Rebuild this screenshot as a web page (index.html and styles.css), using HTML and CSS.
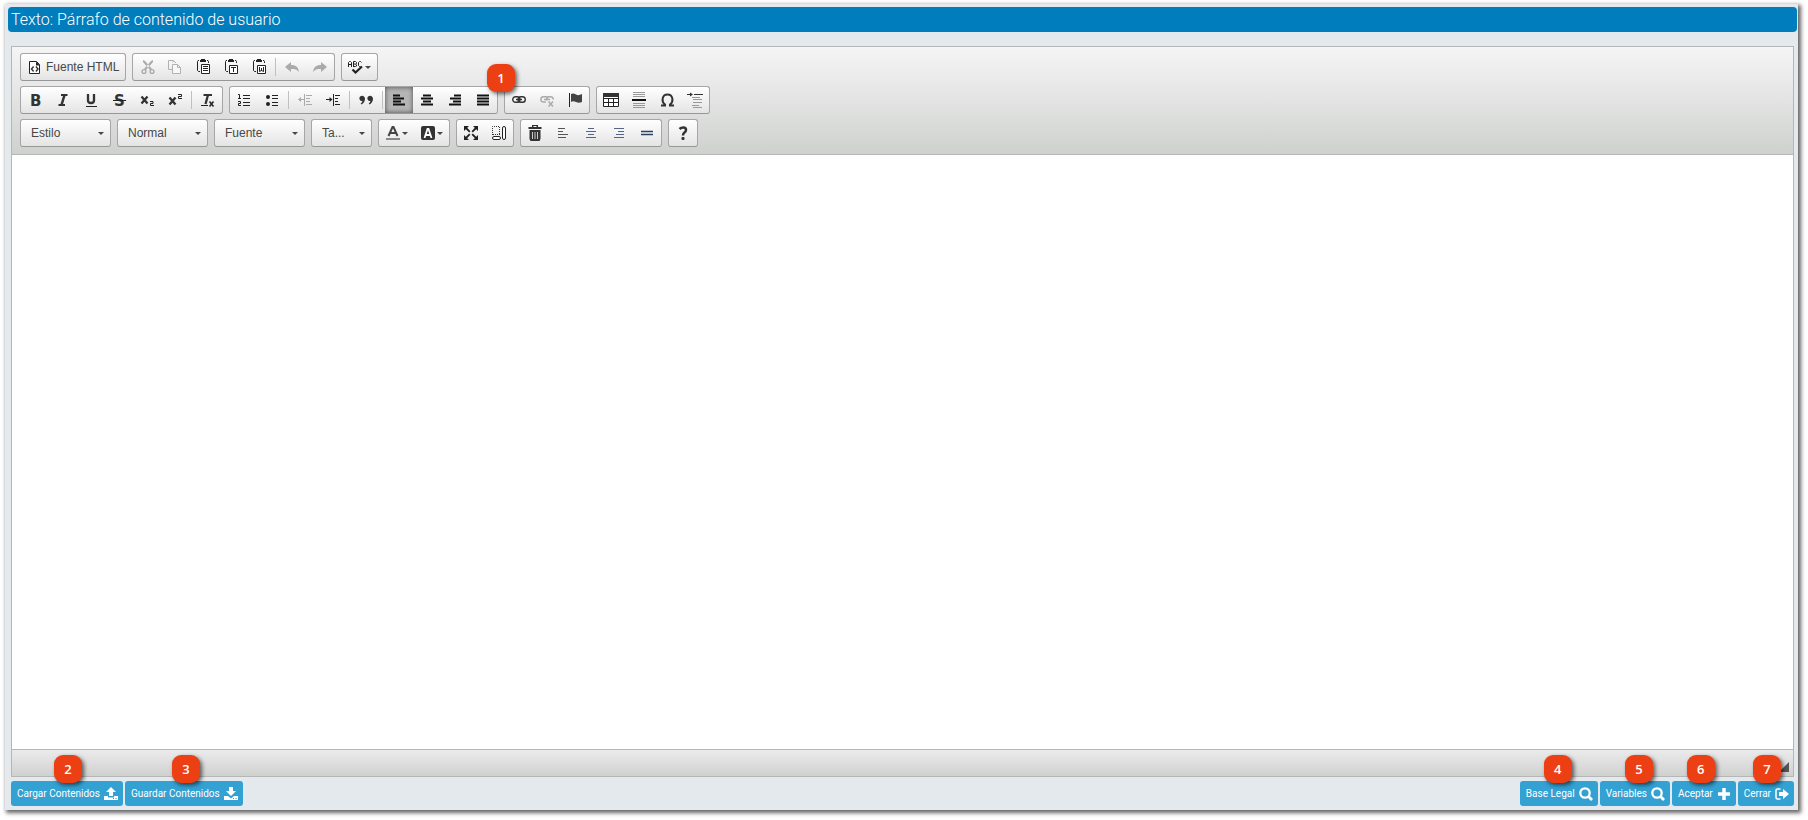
FILE: index.html
```html
<!DOCTYPE html>
<html lang="es">
<head>
<meta charset="utf-8">
<title>Texto: Párrafo de contenido de usuario</title>
<link rel="stylesheet" href="styles.css">
</head>
<body>
<main class="panel">
  <h1 class="title">Texto: Párrafo de contenido de usuario</h1>

  <section class="editor">
    <div class="toolbar" role="toolbar" aria-label="Barra de herramientas">
      <div class="row">
        <div class="group">
          <button class="btn" type="button"><svg class="icon" viewBox="0 0 16 16"><path d="M2.500 2.500h7l3 3v9h-10z" fill="#fff" stroke="#222"/><path d="M9 2.500v4h4" fill="#222"/><path d="M6.600 7.500L4.500 10l2.100 2.500M8.900 7.500L11 10l-2.100 2.500" fill="none" stroke="#333" stroke-width="1.400"/></svg><span class="btn-label">Fuente HTML</span></button>
        </div>
        <div class="group">
          <button class="btn off" type="button" aria-label="Cortar"><svg class="icon" viewBox="0 0 16 16"><path d="M4 1l2 1 7 8-1.500 1.500L4 3zM14 1l-2 1-7 8 1.500 1.500L14 3z" fill="#aaa"/><circle cx="5" cy="12.500" r="1.900" fill="none" stroke="#aaa" stroke-width="1.400"/><circle cx="13" cy="12.500" r="1.900" fill="none" stroke="#aaa" stroke-width="1.400"/></svg></button>
          <button class="btn off" type="button" aria-label="Copiar"><svg class="icon" viewBox="0 0 16 16"><path d="M5 10.500H1.500v-9h5l2.500 2.500M6 1.500v2" fill="none" stroke="#b2b2b2"/><path d="M5.500 5.500h5l3 3v6h-8zM10.500 5.500v3h3" fill="#f8f8f8" stroke="#b2b2b2"/></svg></button>
          <button class="btn" type="button" aria-label="Pegar"><svg class="icon" viewBox="0 0 16 16"><path d="M4 1.500H3l-.500 1v9l1 1h1.500M12 1.500h1l.500 1V4" fill="none" stroke="#222"/><path d="M5 2V1h1V0h4v1h1v2H5z" fill="#222"/><path d="M6.500 5.500h8v9h-8z" fill="#fff" stroke="#222"/><path d="M8 7.500h5M8 9.500h5M8 11.500h5" stroke="#222"/></svg></button>
          <button class="btn" type="button" aria-label="Pegar como texto plano"><svg class="icon" viewBox="0 0 16 16"><path d="M4 1.500H3l-.500 1v9l1 1h1.500M12 1.500h1l.500 1V4" fill="none" stroke="#222"/><path d="M5 2V1h1V0h4v1h1v2H5z" fill="#222"/><path d="M6.500 6.500h8v8h-8z" fill="#fff" stroke="#222"/><path d="M8 8.500h5M10.500 8v5" stroke="#222"/></svg></button>
          <button class="btn" type="button" aria-label="Pegar desde Word"><svg class="icon" viewBox="0 0 16 16"><path d="M4 1.500H3l-.500 1v9l1 1h1.500M12 1.500h1l.500 1V4" fill="none" stroke="#222"/><path d="M5 2V1h1V0h4v1h1v2H5z" fill="#222"/><path d="M6.500 6.500h8v8h-8z" fill="#fff" stroke="#222"/><path d="M8.500 8v4.500l2-1 2 1V8M10.500 9v3" fill="none" stroke="#222"/></svg></button>
          <span class="sep"></span>
          <button class="btn off" type="button" aria-label="Deshacer"><svg class="icon" viewBox="0 0 16 16"><path d="M1 8l6-5v3c5 0 7.500 2.500 8 7C13 10.500 11 10 7 10v3z" fill="#aaa"/></svg></button>
          <button class="btn off" type="button" aria-label="Rehacer"><svg class="icon" viewBox="0 0 16 16"><path d="M15 8L9 3v3c-5 0-7.500 2.500-8 7C3 10.500 5 10 9 10v3z" fill="#aaa"/></svg></button>
        </div>
        <div class="group">
          <button class="btn" type="button" aria-label="Corrector ortográfico"><svg class="icon" viewBox="0 0 16 16"><path d="M.500 8V3.500l1-1h1l1 1V8M.500 5.500h3M5.500 8V2.500h2l1 1v1l-1 .500 1 1v1l-1 .500h-2M5.500 5h2M13.500 3.500l-1-1h-1l-1 1v3l1 1h1" fill="none" stroke="#222"/><path d="M4.500 10.500l3 3L14 7.500" fill="none" stroke="#222" stroke-width="2.200"/></svg><span class="arrow"></span></button>
        </div>
      </div>

      <div class="row">
        <div class="group">
          <button class="btn" type="button" aria-label="Negrita"><svg class="icon glyph" viewBox="0 0 16 16"><text x="3" y="14">B</text></svg></button>
          <button class="btn" type="button" aria-label="Cursiva"><svg class="icon" viewBox="0 0 16 16"><path d="M6 3h6.500M3.500 13H10" stroke="#333" stroke-width="2"/><path d="M9.500 3l-3 10" stroke="#333" stroke-width="2.500"/></svg></button>
          <button class="btn" type="button" aria-label="Subrayado"><svg class="icon" viewBox="0 0 16 16"><path d="M5 2v6.500q0 2.500 3 2.500t3-2.500V2" fill="none" stroke="#333" stroke-width="2.300"/><path d="M3 14.500h11" stroke="#222"/></svg></button>
          <button class="btn" type="button" aria-label="Tachado"><svg class="icon glyph" viewBox="0 0 16 16"><text x="3" y="14">S</text><path d="M2 8.500h13" stroke="#222"/></svg></button>
          <button class="btn" type="button" aria-label="Subíndice"><svg class="icon" viewBox="0 0 16 16"><path d="M2.500 4.500l6 7M8.500 4.500l-6 7" stroke="#333" stroke-width="2.300"/><path d="M11 9.500h3v2h-2.500v2h3.500" fill="none" stroke="#222"/></svg></button>
          <button class="btn" type="button" aria-label="Superíndice"><svg class="icon" viewBox="0 0 16 16"><path d="M2.500 5.500l6 7M8.500 5.500l-6 7" stroke="#333" stroke-width="2.300"/><path d="M11 2.500h3.500v2h-3v2h3.500" fill="none" stroke="#222"/></svg></button>
          <span class="sep"></span>
          <button class="btn" type="button" aria-label="Eliminar formato"><svg class="icon" viewBox="0 0 16 16"><path d="M3.500 3H12" stroke="#333" stroke-width="2"/><path d="M8 3L5.500 12" stroke="#333" stroke-width="2.300"/><path d="M1 13.500h7" stroke="#222"/><path d="M9.500 9.500l4 5M13.500 9.500l-4 5" stroke="#222" stroke-width="1.500"/></svg></button>
        </div>
        <div class="group">
          <button class="btn" type="button" aria-label="Lista numerada"><svg class="icon" viewBox="0 0 16 16"><path d="M2 2.500h1.500v4M2 6.500h3M2 9.500h2.500v2H2.500v2h2.500M7 3.500h7M7 6.500h7M7 10.500h7M7 13.500h7" fill="none" stroke="#222"/></svg></button>
          <button class="btn" type="button" aria-label="Viñetas"><svg class="icon" viewBox="0 0 16 16"><circle cx="4" cy="5" r="2" fill="#222"/><circle cx="4" cy="12" r="2" fill="#222"/><path d="M8 3.500h6M8 6.500h6M8 10.500h6M8 13.500h6" stroke="#222"/></svg></button>
          <span class="sep"></span>
          <button class="btn off" type="button" aria-label="Disminuir sangría"><svg class="icon" viewBox="0 0 16 16"><path d="M2 7.500h5M7.500 2v12M9 3.500h6M9 6.500h4M9 9.500h4M9 12.500h6" stroke="#aaa"/><path d="M1 7.500l3-2.500v5z" fill="#aaa"/></svg></button>
          <button class="btn" type="button" aria-label="Aumentar sangría"><svg class="icon" viewBox="0 0 16 16"><path d="M1 7.500h6M8.500 2v12M10 3.500h5M10 6.500h3M10 9.500h3M10 12.500h5" stroke="#222"/><path d="M7.500 7.500L4.500 5v5z" fill="#222"/></svg></button>
          <span class="sep"></span>
          <button class="btn" type="button" aria-label="Cita"><svg class="icon" viewBox="0 0 16 16"><path d="M3.500 4a2.700 2.700 0 0 1 3.500 2.500c0 3-1.500 5-3.500 6l-.800-1c1-.800 1.600-1.500 1.700-2.500A2.500 2.500 0 0 1 3.500 4zM11.500 4A2.700 2.700 0 0 1 15 6.500c0 3-1.500 5-3.500 6l-.800-1c1-.800 1.600-1.500 1.700-2.500A2.500 2.500 0 0 1 11.500 4z" fill="#333"/></svg></button>
          <span class="sep"></span>
          <button class="btn on" type="button" aria-label="Alinear a la izquierda" aria-pressed="true"><svg class="icon" viewBox="0 0 16 16"><path d="M2 3h7M2 6h11M2 9h8M2 12h12" stroke="#111" stroke-width="2" transform="translate(0 .5)"/></svg></button>
          <button class="btn" type="button" aria-label="Centrar"><svg class="icon" viewBox="0 0 16 16"><path d="M4 3h8M2 6h12M4 9h8M2 12h12" stroke="#111" stroke-width="2" transform="translate(0 .5)"/></svg></button>
          <button class="btn" type="button" aria-label="Alinear a la derecha"><svg class="icon" viewBox="0 0 16 16"><path d="M7 3h7M3 6h11M6 9h8M2 12h12" stroke="#111" stroke-width="2" transform="translate(0 .5)"/></svg></button>
          <button class="btn" type="button" aria-label="Justificar"><svg class="icon" viewBox="0 0 16 16"><path d="M2 3h12M2 6h12M2 9h12M2 12h12" stroke="#111" stroke-width="2" transform="translate(0 .5)"/></svg></button>
          <span class="badge badge-1">1</span>
        </div>
        <div class="group">
          <button class="btn" type="button" aria-label="Vínculo"><svg class="icon" viewBox="0 0 16 16"><rect x="1.700" y="4.700" width="7.300" height="5.600" rx="2.800" fill="none" stroke="#333" stroke-width="1.400"/><rect x="7" y="4.700" width="7.300" height="5.600" rx="2.800" fill="none" stroke="#333" stroke-width="1.400"/><path d="M5 7.500h6" stroke="#333" stroke-width="1.400"/></svg></button>
          <button class="btn off" type="button" aria-label="Quitar vínculo"><svg class="icon" viewBox="0 0 16 16"><path d="M7 10H4.500a2.600 2.600 0 0 1 0-5.200H7q1.500.200 2 1.500M8 8.500q-1.500-3.700 2-3.700h1.500q2.800.200 2.800 2.700M5 7.500h6" fill="none" stroke="#aaa" stroke-width="1.400"/><path d="M9.500 9.500l4.500 5M14 9.500l-4.500 5" stroke="#aaa" stroke-width="1.500"/></svg></button>
          <button class="btn" type="button" aria-label="Ancla"><svg class="icon" viewBox="0 0 16 16"><path d="M2.500 1v14" stroke="#222"/><path d="M4 2q2.500-1 5 .500T15 2v8q-3 1.500-6 0t-5 0z" fill="#444"/></svg></button>
        </div>
        <div class="group">
          <button class="btn" type="button" aria-label="Tabla"><svg class="icon" viewBox="0 0 16 16"><path d="M.500 2.500h15v12H.500zM1 6.500h14M1 10.500h14M5.500 6v8M10.500 6v8" fill="#fff" stroke="#222"/><path d="M0 1h16v4H0z" fill="#333"/></svg></button>
          <button class="btn" type="button" aria-label="Línea horizontal"><svg class="icon" viewBox="0 0 16 16"><path d="M2 .500h12M2 2.500h12M2 4.500h12M2 11.500h12M2 13.500h12M2 15.500h12" stroke="#999"/><path d="M1 8h14" stroke="#111" stroke-width="2"/></svg></button>
          <button class="btn" type="button" aria-label="Carácter especial"><svg class="icon" viewBox="0 0 16 16"><path d="M2 13.500h4v-1C4 11 3.300 9 3.600 6.800 4 4.300 6 2.500 8.500 2.500s4.500 1.800 4.900 4.300c.300 2.200-.400 4.200-2.400 5.700v1h4" fill="none" stroke="#333" stroke-width="2"/></svg></button>
          <button class="btn" type="button" aria-label="Salto de página"><svg class="icon" viewBox="0 0 16 16"><path d="M0 2.500h5M7 2.500h9" stroke="#333"/><path d="M3 .500l3 2-3 2z" fill="#333"/><path d="M5 5.500h8M6 7.500h9M6 10.500h9M5 13.500h7M6 15.500h9" stroke="#999"/></svg></button>
        </div>
      </div>

      <div class="row">
        <span class="combo"><select aria-label="Estilo"><option>Estilo</option></select></span>
        <span class="combo"><select aria-label="Formato"><option>Normal</option></select></span>
        <span class="combo"><select aria-label="Fuente"><option>Fuente</option></select></span>
        <span class="combo small"><select aria-label="Tamaño"><option>Ta...</option></select></span>
        <div class="group">
          <button class="btn" type="button" aria-label="Color de texto"><svg class="icon" viewBox="0 0 16 16"><path d="M3.500 11L7.500 2h1l4 9M5.500 8h5" fill="none" stroke="#444" stroke-width="2"/><path d="M1 14h14" stroke="#888" stroke-width="2"/></svg><span class="arrow"></span></button>
          <button class="btn" type="button" aria-label="Color de fondo"><svg class="icon" viewBox="0 0 16 16"><rect x="1" y="1" width="14" height="14" rx="2" fill="#333"/><path d="M4.500 13l3-9h1l3 9M6 10h4" fill="none" stroke="#fff" stroke-width="1.800"/></svg><span class="arrow"></span></button>
        </div>
        <div class="group">
          <button class="btn" type="button" aria-label="Maximizar"><svg class="icon" viewBox="0 0 16 16"><path d="M1 1h5L1 6zM15 1v5L10 1zM1 15V10L6 15zM15 15H10L15 10z" fill="#222"/><path d="M3 3l3.800 3.800M13 3L9.200 6.800M3 13l3.800-3.800M13 13L9.200 9.200" stroke="#222" stroke-width="1.800"/></svg></button>
          <button class="btn" type="button" aria-label="Mostrar bloques"><svg class="icon" viewBox="0 0 16 16"><path d="M1.500 10V1.500H9M8.500 2v8M2 9.500h7" fill="none" stroke="#333" stroke-dasharray="1 1"/><rect x="11.500" y="1.500" width="3" height="13" rx="1.500" fill="#fff" stroke="#222"/><rect x="1.500" y="11.500" width="8" height="3" rx="1.500" fill="#fff" stroke="#222"/></svg></button>
        </div>
        <div class="group">
          <button class="btn" type="button" aria-label="Eliminar"><svg class="icon" viewBox="0 0 16 16"><path d="M1.500 2h13v2h-13zM5 2V0h6v2H9.500V1h-3v1zM2.500 5h11v9l-1 2h-9l-1-2z" fill="#333"/><path d="M5.500 7v7M8 7v7M10.500 7v7" stroke="#ccc"/></svg></button>
          <button class="btn" type="button" aria-label="Párrafo a la izquierda"><svg class="icon" viewBox="0 0 16 16"><path d="M3 3.500h7M3 6.500h5M3 9.500h10M3 12.500h8" stroke="#555"/></svg></button>
          <button class="btn" type="button" aria-label="Párrafo centrado"><svg class="icon" viewBox="0 0 16 16"><path d="M5 3.500h6M3 6.500h10M5 9.500h6M3 12.500h10" stroke="#556585"/></svg></button>
          <button class="btn" type="button" aria-label="Párrafo a la derecha"><svg class="icon" viewBox="0 0 16 16"><path d="M3 3.500h10M7 6.500h6M5 9.500h8M3 12.500h10" stroke="#556585"/></svg></button>
          <button class="btn" type="button" aria-label="Separador"><svg class="icon" viewBox="0 0 16 16"><path d="M2 6.500h12M2 9.500h12" stroke="#2b4266" stroke-width="1.500"/></svg></button>
        </div>
        <div class="group">
          <button class="btn" type="button" aria-label="Ayuda"><svg class="icon" viewBox="0 0 16 16"><path d="M4.500 4Q6 2.500 8.500 2.500T11 5Q11 6.500 9.500 7.500T8 10.500" fill="none" stroke="#333" stroke-width="2.500"/><rect x="6.500" y="12" width="3" height="3" rx="1" fill="#333"/></svg></button>
        </div>
      </div>
    </div>
    <div class="content" contenteditable="true" role="textbox" aria-label="Contenido"></div>
    <div class="statusbar"><span class="resizer"></span></div>
  </section>

  <footer class="actions">
    <button class="action" type="button">Cargar Contenidos<svg class="aicon" viewBox="0 0 14 14"><path d="M7 0l5 5H9v4H5V5H2zM0 9h4v1.500h6V9h4v4H0z" fill="#fff"/><path d="M9 11.500h1M11.500 11.500h1" stroke="#34a1d3"/></svg><span class="badge badge-2">2</span></button>
    <button class="action" type="button">Guardar Contenidos<svg class="aicon" viewBox="0 0 14 14"><path d="M5 0h4v4h3L7 9 2 4h3zM0 9h4l3 2.500L10 9h4v4H0z" fill="#fff"/><path d="M9 11.500h1M11.500 11.500h1" stroke="#34a1d3"/></svg><span class="badge badge-3">3</span></button>
    <span class="spacer"></span>
    <button class="action" type="button">Base Legal<svg class="aicon" viewBox="0 0 14 14"><circle cx="6" cy="6" r="4.700" fill="none" stroke="#fff" stroke-width="2.300"/><path d="M9 9l4 4" stroke="#fff" stroke-width="2.800"/></svg><span class="badge badge-4">4</span></button>
    <button class="action" type="button">Variables<svg class="aicon" viewBox="0 0 14 14"><circle cx="6" cy="6" r="4.700" fill="none" stroke="#fff" stroke-width="2.300"/><path d="M9 9l4 4" stroke="#fff" stroke-width="2.800"/></svg><span class="badge badge-5">5</span></button>
    <button class="action" type="button">Aceptar<svg class="aicon" viewBox="0 0 14 14"><path d="M7 1v12M1 7h12" stroke="#fff" stroke-width="3.500"/></svg><span class="badge badge-6">6</span></button>
    <button class="action" type="button">Cerrar<svg class="aicon" viewBox="0 0 14 14"><path d="M5.500 2H2.500Q1 2 1 3.500v7Q1 12 2.500 12h3" fill="none" stroke="#fff" stroke-width="1.500"/><path d="M4 5h4V2l6 5-6 5V9H4z" fill="#fff"/></svg><span class="badge badge-7">7</span></button>
  </footer>
</main>
</body>
</html>
```

FILE: styles.css
```css
* {
  box-sizing: border-box;
}

body {
  margin: 0;
  height: 100vh;
  padding: 4px 10px 10px 5px;
  background: #fff;
  font-family: "Liberation Sans", Arial, sans-serif;
  font-size: 12px;
  display: flex;
}

button,
select {
  font: inherit;
  margin: 0;
}

.panel {
  flex: 1;
  display: flex;
  flex-direction: column;
  padding: 3px 1px 4px 3px;
  background: #e4e9ed;
  box-shadow: 2px 2px 4px 1px rgba(0, 0, 0, 0.6);
}

.title {
  margin: 0 0 14px;
  padding: 0 3px;
  height: 25px;
  border-radius: 4px;
  background: #007dbd;
  color: #fff;
  font-family: Roboto, sans-serif;
  font-size: 16px;
  font-weight: 300;
  line-height: 26px;
}

.editor {
  flex: 1;
  display: flex;
  flex-direction: column;
  margin: 0 3px;
  border: 1px solid #b6b6b6;
}

.toolbar {
  display: flex;
  flex-direction: column;
  gap: 5px;
  padding: 6px 8px 7px;
  border-bottom: 1px solid #b6b6b6;
  background: linear-gradient(#f5f5f5, #cfd1cf);
}

.row {
  display: flex;
  gap: 6px;
}

.group {
  position: relative;
  display: flex;
  height: 28px;
  border: 1px solid #a6a6a6;
  border-bottom-color: #979797;
  border-radius: 3px;
  background: linear-gradient(#fff, #e4e4e4);
}

.btn {
  display: flex;
  align-items: center;
  padding: 0 6px;
  border: 0;
  background: none;
  color: #474747;
}

.btn.on {
  background: #b5b5b5;
  box-shadow: inset 0 0 5px rgba(0, 0, 0, 0.6);
}

.btn-label {
  padding-left: 3px;
}

.icon {
  width: 16px;
  height: 16px;
  overflow: visible;
}

.glyph {
  font-family: "DejaVu Sans", sans-serif;
  font-size: 15px;
  font-weight: 700;
  fill: #333;
}

.arrow {
  width: 6px;
  margin-left: 1px;
  border: 3px solid transparent;
  border-top-color: #474747;
  border-bottom-width: 0;
}

.sep {
  width: 1px;
  height: 18px;
  margin: 4px 2px;
  background: #c0c0c0;
}

.combo {
  position: relative;
  width: 91px;
  height: 28px;
}

.combo.small {
  width: 61px;
}

.combo select {
  appearance: none;
  width: 100%;
  height: 100%;
  padding: 0 10px;
  border: 1px solid #a6a6a6;
  border-bottom-color: #979797;
  border-radius: 3px;
  background: linear-gradient(#fff, #e4e4e4);
  color: #474747;
}

.combo::after {
  content: "";
  position: absolute;
  right: 7px;
  top: 13px;
  border: 3px solid transparent;
  border-top-color: #474747;
  border-bottom-width: 0;
  pointer-events: none;
}

.content {
  flex: 1;
  background: #fff;
  outline: 0;
}

.statusbar {
  display: flex;
  justify-content: flex-end;
  align-items: flex-end;
  height: 27px;
  padding: 4px;
  border-top: 1px solid #b6b6b6;
  background: linear-gradient(#ebebeb, #cfd1cf);
}

.resizer {
  border: 5px solid #555;
  border-top-color: transparent;
  border-left-color: transparent;
}

.actions {
  display: flex;
  gap: 2px;
  margin: 4px 3px 0;
}

.spacer {
  flex: 1;
}

.action {
  position: relative;
  display: flex;
  align-items: center;
  gap: 4px;
  height: 25px;
  padding: 0 5px 0 6px;
  border: 0;
  border-radius: 3px;
  background: #34a1d3;
  color: #fff;
  font-family: Roboto, sans-serif;
  font-size: 10px;
}

.aicon {
  width: 14px;
  height: 14px;
}

.badge {
  position: absolute;
  top: -26px;
  width: 28px;
  height: 28px;
  border-radius: 9px;
  background: #ec3f13;
  box-shadow: 2px 2px 4px rgba(0, 0, 0, 0.6);
  color: #fff;
  font-family: "Open Sans", sans-serif;
  font-size: 13px;
  font-weight: 600;
  line-height: 28px;
  text-align: center;
}

.badge-1 { top: -23px; right: -18px; z-index: 1; }
.badge-2 { left: 43px; }
.badge-3 { left: 47px; }
.badge-4 { right: 26px; }
.badge-5 { right: 17px; }
.badge-6 { right: 21px; }
.badge-7 { right: 13px; }
```
